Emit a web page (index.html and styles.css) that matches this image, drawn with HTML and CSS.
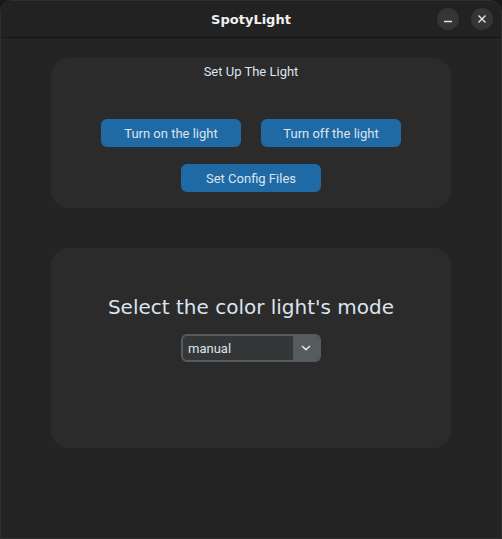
FILE: index.html
```html
<!DOCTYPE html>
<html>
<head>
<meta charset="utf-8">
<link rel="stylesheet" href="styles.css">
</head>
<body>
<div class="window">
  <header class="titlebar">
    <span class="title">SpotyLight</span>
    <div class="controls">
      <span class="ctl"><svg width="10" height="10" viewBox="0 0 10 10"><line x1="1" y1="7.5" x2="9" y2="7.5" stroke="#e6e6e6" stroke-width="1.4"/></svg></span>
      <span class="ctl"><svg width="10" height="10" viewBox="0 0 10 10"><path d="M1.5 1.5 L8.5 8.5 M8.5 1.5 L1.5 8.5" stroke="#e6e6e6" stroke-width="1.4"/></svg></span>
    </div>
  </header>
  <main class="content">
    <section class="card card-setup">
      <div class="card-title">Set Up The Light</div>
      <div class="btn-row first">
        <button class="btn">Turn on the light</button>
        <button class="btn">Turn off the light</button>
      </div>
      <div class="btn-row">
        <button class="btn">Set Config Files</button>
      </div>
    </section>
    <section class="card card-mode">
      <div class="mode-label">Select the color light's mode</div>
      <div class="combo">
        <span class="combo-text">manual</span>
        <span class="combo-btn"><svg width="10" height="6" viewBox="0 0 10 6"><path d="M1 1 L5 4.6 L9 1" fill="none" stroke="#dce4ee" stroke-width="1.6"/></svg></span>
      </div>
    </section>
  </main>
</div>
</body>
</html>
```

FILE: styles.css
```css
html, body {
  margin: 0;
  padding: 0;
  background: #1a1a1a;
}
.window {
  width: 502px;
  height: 539px;
  box-sizing: border-box;
  background: #242424;
  border: 1px solid #2f2f2f;
  border-radius: 12px 12px 0 0;
  overflow: hidden;
  display: flex;
  flex-direction: column;
}
.titlebar {
  height: 36px;
  flex: none;
  background: #222222;
  border-bottom: 1px solid #151515;
  display: flex;
  align-items: center;
  justify-content: center;
  position: relative;
}
.title {
  font-family: "DejaVu Sans", sans-serif;
  font-weight: bold;
  font-size: 13px;
  color: #f0f0f0;
  padding-top: 1px;
}
.controls {
  position: absolute;
  right: 8px;
  top: 7px;
  display: flex;
  gap: 12px;
}
.ctl {
  width: 22px;
  height: 22px;
  border-radius: 50%;
  background: #353535;
  display: flex;
  align-items: center;
  justify-content: center;
}
.content {
  padding: 20px 50px 0;
  display: flex;
  flex-direction: column;
  gap: 40px;
}
.card {
  background: #2b2b2b;
  border-radius: 18px;
  display: flex;
  flex-direction: column;
  align-items: center;
}
.card-setup {
  height: 150px;
  box-sizing: border-box;
  padding-top: 6px;
}
.card-title {
  font-family: Roboto, sans-serif;
  font-size: 13px;
  line-height: 16px;
  color: #dce4ee;
}
.btn-row {
  display: flex;
  gap: 20px;
  margin-top: 17px;
}
.btn-row.first {
  margin-top: 39px;
}
.btn {
  width: 140px;
  height: 28px;
  border: none;
  border-radius: 6px;
  background: #1f6aa5;
  color: #dce4ee;
  font-family: Roboto, sans-serif;
  font-size: 13px;
  padding: 0;
}
.card-mode {
  height: 200px;
  box-sizing: border-box;
  padding-top: 47px;
}
.mode-label {
  font-family: "DejaVu Sans", sans-serif;
  font-size: 20px;
  line-height: 24px;
  color: #dce4ee;
}
.combo {
  margin-top: 15px;
  width: 140px;
  height: 28px;
  box-sizing: border-box;
  border: 2px solid #565b5e;
  border-radius: 6px;
  background: #343638;
  display: flex;
  align-items: center;
  overflow: hidden;
}
.combo-text {
  flex: 1;
  padding-left: 5px;
  font-family: Roboto, sans-serif;
  font-size: 13px;
  color: #dce4ee;
}
.combo-btn {
  width: 26px;
  height: 100%;
  background: #565b5e;
  display: flex;
  align-items: center;
  justify-content: center;
}
```
